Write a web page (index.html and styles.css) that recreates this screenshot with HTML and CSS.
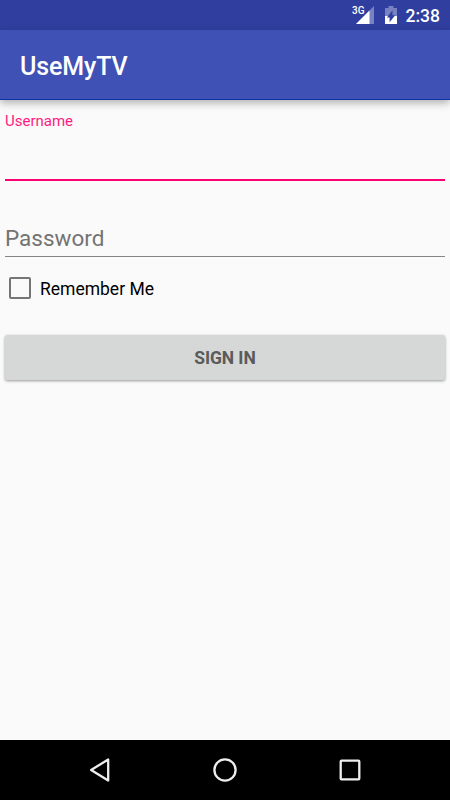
FILE: index.html
```html
<!DOCTYPE html>
<html lang="en">
<head>
<meta charset="utf-8">
<title>UseMyTV</title>
<link rel="stylesheet" href="styles.css">
</head>
<body>
<div class="screen">
  <div class="status">
    <span class="network">3G</span>
    <svg class="signal" width="18" height="18" viewBox="0 0 18 18"><path d="M18 0V18H0Z" fill="#fff" fill-opacity=".35"/><path d="M13.5 4.5V18H0Z" fill="#fff"/></svg>
    <svg class="battery" width="12" height="18" viewBox="0 0 12 18"><path d="M0 2H3.5V0H8.5V2H12V10H0Z" fill="#fff" fill-opacity=".35"/><path d="M0 10H12V18H0Z" fill="#fff"/><path d="M7.5 4.2V9.2H10.2L4.6 16.2V11.4H1.9Z" fill="#303f9f"/></svg>
    <span class="clock">2:38</span>
  </div>
  <header class="appbar"><h1>UseMyTV</h1></header>
  <main class="form">
    <label class="username">Username</label>
    <div class="password">Password</div>
    <label class="remember"><span class="box"></span><span class="caption">Remember Me</span></label>
    <button class="signin" type="button">SIGN IN</button>
  </main>
  <nav class="navbar">
    <svg viewBox="0 0 30 30"><path d="M6.1 15L23.2 4.5V25.5Z"/></svg>
    <svg viewBox="0 0 30 30"><circle cx="15" cy="15" r="10.6"/></svg>
    <svg viewBox="0 0 30 30"><rect x="5.7" y="5.7" width="18.6" height="18.6" rx=".8"/></svg>
  </nav>
</div>
</body>
</html>
```
FILE: styles.css
```css
* { box-sizing: border-box; }
body { margin: 0; font-family: Roboto, sans-serif; background: #fafafa; }
.screen { width: 450px; height: 800px; display: flex; flex-direction: column; overflow: hidden; }
.status {
  height: 30px; flex: none; background: #303f9f; color: #fff;
  display: flex; align-items: flex-start; justify-content: flex-end; padding: 6px 10px 0 0;
}
.network { font-size: 10px; line-height: 10px; font-weight: 500; margin-right: -9px; }
.signal { margin-right: 11px; }
.battery { margin-right: 9px; }
.clock { font-size: 17.5px; line-height: 20px; font-weight: 500; }
.appbar {
  height: 70px; flex: none; background: #3f51b5; border-bottom: 1px solid #0c34a8;
  padding: 0 20px; display: flex; align-items: center;
  box-shadow: 0 3px 8px rgba(0, 0, 0, .3);
}
h1 { margin: 5px 0 0; font-size: 25px; line-height: 30px; font-weight: 500; letter-spacing: -.1px; color: #fff; }
.form { flex: 1; padding: 11px 5px 0; display: flex; flex-direction: column; }
.username { height: 70px; border-bottom: 2px solid #ff0072; color: #ff1a80; font-size: 15px; line-height: 20px; }
.password { height: 76px; border-bottom: 1px solid #858585; padding-top: 42px; font-size: 22.5px; line-height: 30px; color: #737373; }
.remember { height: 61px; display: flex; align-items: center; font-size: 17.5px; color: #000; }
.caption { padding-top: 2px; }
.box { width: 22px; height: 22px; margin: 0 9px 0 4px; border: 2px solid #757575; border-radius: 2px; }
.signin {
  height: 45px; margin-top: 17px; border: 0; border-radius: 2.5px; background: #d6d8d7;
  color: #5a5b5b; font: 700 17.5px/45px Roboto, sans-serif; letter-spacing: -.1px;
  box-shadow: 0 1px 3px rgba(0, 0, 0, .4);
}
.navbar { height: 60px; flex: none; background: #000; display: flex; justify-content: center; align-items: center; gap: 95px; }
.navbar svg { width: 30px; height: 30px; fill: none; stroke: #eee; stroke-width: 2.3; stroke-linejoin: round; }
```
